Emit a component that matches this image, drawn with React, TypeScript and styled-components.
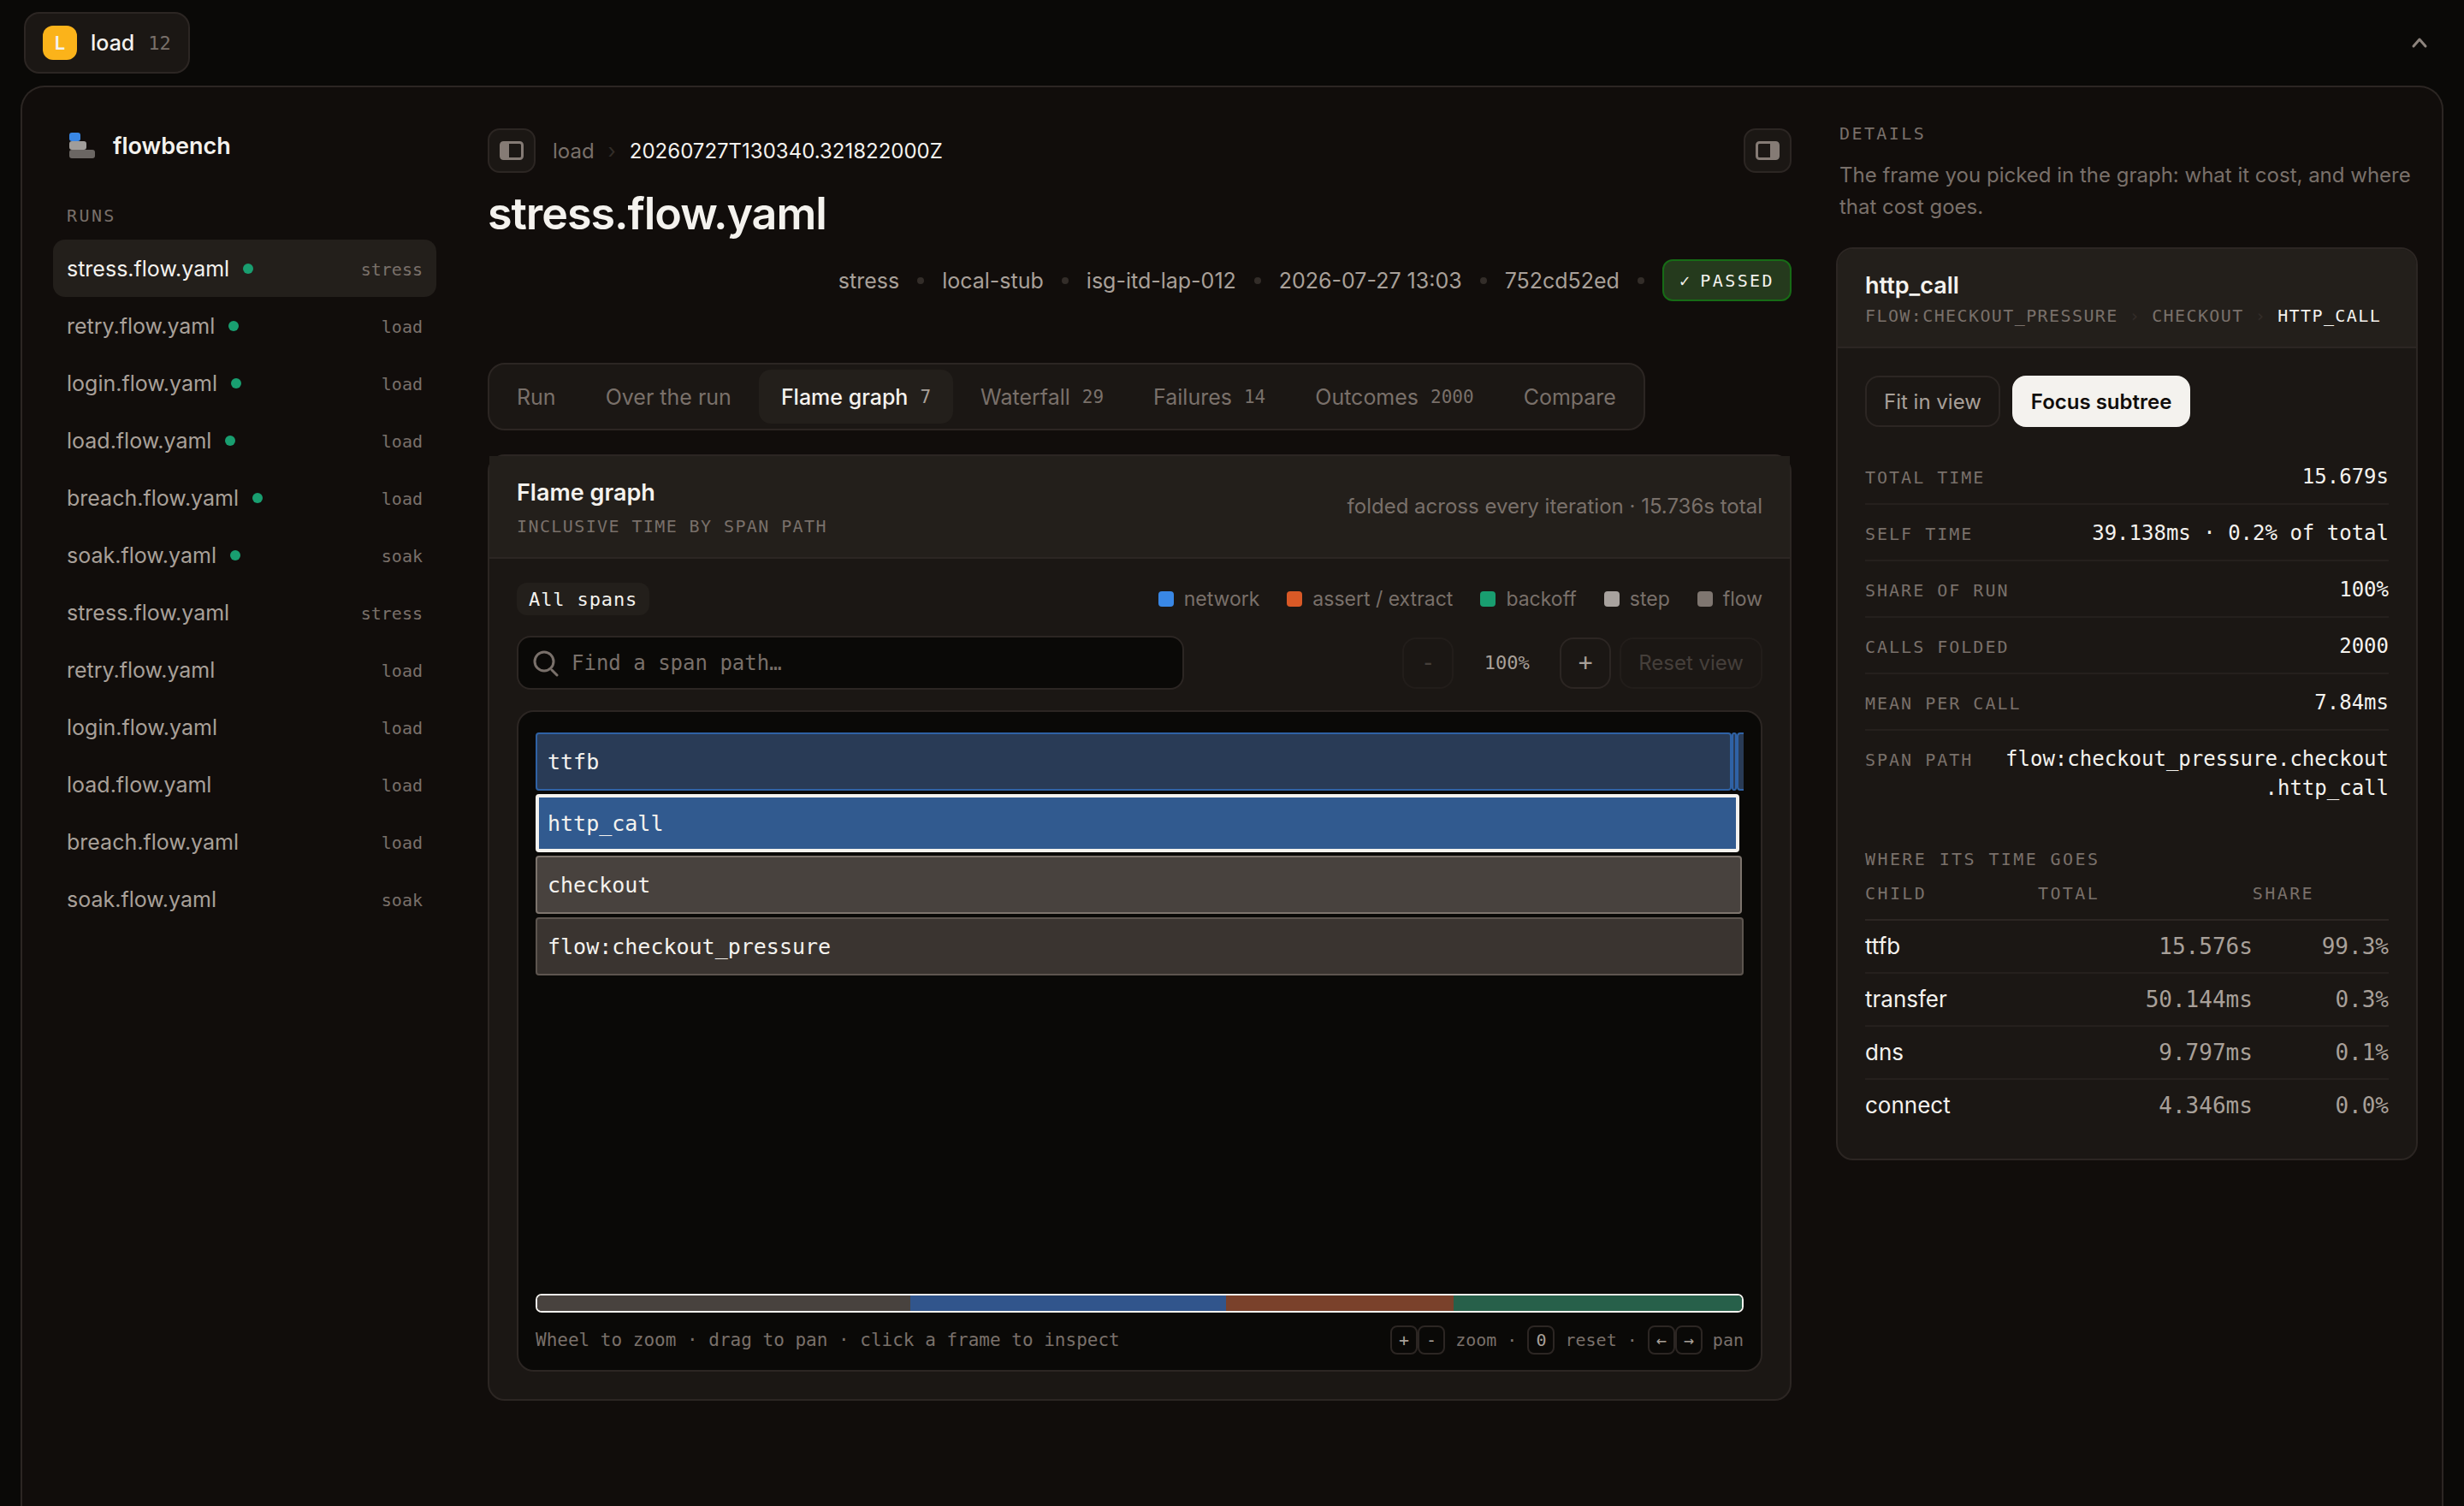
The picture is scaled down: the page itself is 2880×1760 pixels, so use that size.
import React from "react";
import styled, { createGlobalStyle, css } from "styled-components";

const c = {
  page: "#0a0907",
  shell: "#110d0b",
  card: "#1b1714",
  raised: "#231f1b",
  line: "#2c2623",
  hairline: "#25201d",
  text: "#f4f2ee",
  soft: "#a8a099",
  muted: "#79706a",
  faint: "#332d29",
  blue: "#3987e5",
  orange: "#d95926",
  green: "#199e70",
  step: "#a8a29e",
  flow: "#7f7670",
};

const sans = `Inter, "Liberation Sans", sans-serif`;
const mono = `"DejaVu Sans Mono", "Liberation Mono", monospace`;

const GlobalStyle = createGlobalStyle`
  *, *::before, *::after { box-sizing: border-box; }
  html { background: ${c.page}; }
  body {
    margin: 0;
    background: ${c.page};
    color: ${c.text};
    font-family: ${sans};
    font-size: 24px;
    -webkit-font-smoothing: antialiased;
  }
  h1, h2, h3, p, ul, dl, dd, dt { margin: 0; padding: 0; font-weight: inherit; }
  ul { list-style: none; }
  a { color: inherit; text-decoration: none; }
  button, input { font: inherit; color: inherit; }
  button { background: none; border: 0; padding: 0; cursor: pointer; }
`;

const Page = styled.div`
  display: flex;
  flex-direction: column;
  min-height: 100vh;
`;

/* ---------- top bar ---------- */

const TopBar = styled.header`
  display: flex;
  align-items: center;
  justify-content: space-between;
  padding: 14px 40px 14px 28px;
`;

const ProjectTab = styled.button`
  display: flex;
  align-items: center;
  height: 72px;
  padding: 0 20px;
  gap: 16px;
  border: 2px solid ${c.line};
  border-radius: 18px;
  background: ${c.card};
  font-size: 25px;
  font-weight: 500;
`;

const ProjectMark = styled.span`
  display: grid;
  place-items: center;
  width: 40px;
  height: 40px;
  border-radius: 12px;
  background: #fbb31a;
  font-size: 22px;
  font-weight: 600;
`;

const ProjectCount = styled.span`
  font-family: ${mono};
  font-size: 22px;
  font-weight: 400;
  color: ${c.muted};
`;

const CollapseButton = styled.button`
  display: grid;
  place-items: center;
  width: 24px;
  height: 24px;
  color: #8d847d;
`;

/* ---------- shell ---------- */

const Shell = styled.div`
  flex: 1;
  display: grid;
  grid-template-columns: 448px minmax(0, 1fr) 680px;
  align-items: start;
  margin: 0 24px;
  padding: 40px 28px 120px 36px;
  border: 2px solid ${c.line};
  border-bottom: 0;
  border-radius: 28px 28px 0 0;
  background: ${c.shell};
`;

const Overline = styled.h2<{ $pad?: number }>`
  padding-left: ${(p) => p.$pad ?? 0}px;
  font-family: ${mono};
  font-size: 20px;
  line-height: 28px;
  letter-spacing: 0.12em;
  text-transform: uppercase;
  color: ${c.muted};
`;

/* ---------- sidebar ---------- */

const Sidebar = styled.nav`
  padding-top: 8px;
`;

const Brand = styled.div`
  display: flex;
  align-items: center;
  gap: 20px;
  height: 40px;
  padding-left: 18px;
  margin-bottom: 48px;
  font-size: 27px;
  font-weight: 600;
`;

const RunList = styled.ul`
  margin-top: 14px;
`;

const RunLink = styled.a<{ $active?: boolean }>`
  display: flex;
  align-items: center;
  gap: 16px;
  height: 67px;
  padding: 0 16px;
  border-radius: 14px;
  background: ${(p) => (p.$active ? c.raised : "transparent")};
  color: ${(p) => (p.$active ? c.text : c.soft)};
  font-size: 25px;
`;

const RunDot = styled.span`
  width: 12px;
  height: 12px;
  border-radius: 50%;
  background: ${c.green};
`;

const RunKind = styled.span`
  margin-left: auto;
  padding-top: 2px;
  font-family: ${mono};
  font-size: 20px;
  color: ${c.muted};
`;

/* ---------- main ---------- */

const Main = styled.main`
  padding: 8px 52px 0 60px;
`;

const CrumbBar = styled.div`
  display: flex;
  align-items: center;
  height: 52px;
`;

const PanelButton = styled.button<{ $end?: boolean }>`
  display: grid;
  place-items: center;
  width: 56px;
  height: 52px;
  margin-left: ${(p) => (p.$end ? "auto" : "0")};
  border: 2px solid ${c.line};
  border-radius: 14px;
  background: ${c.card};
`;

const Crumbs = styled.div`
  display: flex;
  align-items: center;
  gap: 16px;
  padding-left: 20px;
  color: ${c.text};
`;

const CrumbLink = styled.a`
  color: ${c.muted};
`;

const CrumbSep = styled.span`
  color: ${c.faint};
`;

const Title = styled.h1`
  margin: 18px 0 23px;
  font-size: 52px;
  line-height: 60px;
  font-weight: 600;
  letter-spacing: -0.02em;
`;

const MetaRow = styled.div`
  display: flex;
  align-items: center;
  justify-content: flex-end;
  gap: 21px;
  height: 49px;
  color: ${c.soft};
  font-size: 25px;
`;

const MetaDot = styled.span`
  width: 8px;
  height: 8px;
  border-radius: 50%;
  background: ${c.faint};
`;

const Badge = styled.span`
  display: flex;
  align-items: center;
  gap: 10px;
  height: 49px;
  padding: 0 18px;
  border: 2px solid #176b16;
  border-radius: 12px;
  background: #253a1d;
  color: ${c.text};
  font-family: ${mono};
  font-size: 20px;
  letter-spacing: 0.12em;
`;

const TabBar = styled.div`
  display: inline-flex;
  gap: 6px;
  margin-top: 72px;
  padding: 6px;
  border: 2px solid ${c.line};
  border-radius: 20px;
  background: ${c.card};
`;

const Tab = styled.button<{ $active?: boolean }>`
  display: flex;
  align-items: center;
  gap: 14px;
  height: 63px;
  padding: 0 26px;
  border-radius: 14px;
  color: ${c.muted};
  font-size: 25px;
  ${(p) =>
    p.$active &&
    css`
      background: ${c.raised};
      color: ${c.text};
      font-weight: 500;
    `}
`;

const TabCount = styled.span<{ $active?: boolean }>`
  font-family: ${mono};
  font-size: 21px;
  font-weight: 400;
  color: ${(p) => (p.$active ? c.soft : c.muted)};
`;

/* ---------- cards ---------- */

const Card = styled.section<{ $clip?: boolean }>`
  border: 2px solid ${c.line};
  border-radius: 20px;
  background: ${c.card};
  overflow: ${(p) => (p.$clip ? "hidden" : "visible")};
`;

const CardHeader = styled.header`
  display: flex;
  align-items: center;
  justify-content: space-between;
  padding: 27px 32px 24px;
  border-bottom: 2px solid ${c.line};
  background: ${c.raised};
`;

const CardTitle = styled.h2`
  font-size: 27px;
  line-height: 32px;
  font-weight: 600;
`;

const CardSub = styled.div<{ $gap: number }>`
  display: flex;
  gap: 13px;
  margin-top: ${(p) => p.$gap}px;
  font-family: ${mono};
  font-size: 20px;
  line-height: 24px;
  letter-spacing: 0.07em;
  text-transform: uppercase;
  white-space: nowrap;
  color: ${c.muted};
`;

const CardNote = styled.p`
  padding-bottom: 4px;
  color: ${c.muted};
`;

const FlameCard = styled(Card)`
  margin-top: 28px;
`;

const FlameBody = styled.div`
  display: flex;
  flex-direction: column;
  gap: 24px;
  padding: 28px 32px 32px;
`;

const Spread = styled.div`
  display: flex;
  align-items: center;
  justify-content: space-between;
`;

const ScopeChip = styled.button`
  height: 38px;
  padding: 0 14px;
  border-radius: 12px;
  background: ${c.raised};
  font-family: ${mono};
  font-size: 22px;
  letter-spacing: 0.04em;
`;

const Legend = styled.ul`
  display: flex;
  gap: 32px;
  color: ${c.muted};
  font-size: 23px;
`;

const LegendItem = styled.li`
  display: flex;
  align-items: center;
  gap: 12px;
`;

const Swatch = styled.span<{ $color: string }>`
  width: 18px;
  height: 18px;
  border-radius: 4px;
  background: ${(p) => p.$color};
`;

const SearchBox = styled.label`
  display: flex;
  align-items: center;
  gap: 14px;
  width: 780px;
  height: 63px;
  padding: 0 16px;
  border: 2px solid ${c.line};
  border-radius: 16px;
  background: ${c.page};
`;

const SearchInput = styled.input`
  flex: 1;
  min-width: 0;
  padding: 0;
  border: 0;
  outline: 0;
  background: transparent;
  font-family: ${mono};
  font-size: 24px;
  &::placeholder {
    color: ${c.muted};
    opacity: 1;
  }
`;

const ZoomGroup = styled.div`
  display: flex;
  align-items: center;
  gap: 10px;
`;

const OutlineButton = styled.button<{ $square?: boolean; $primary?: boolean }>`
  height: 60px;
  ${(p) =>
    p.$square
      ? css`
          width: 60px;
          font-family: ${mono};
          font-size: 28px;
        `
      : css`
          padding: 0 20px;
        `}
  border: 2px solid ${(p) => (p.$primary ? c.text : c.line)};
  border-radius: 16px;
  background: ${(p) => (p.$primary ? c.text : "transparent")};
  color: ${(p) => (p.$primary ? c.shell : c.soft)};
  font-weight: ${(p) => (p.$primary ? 600 : 400)};
  &:disabled {
    color: ${c.muted};
    opacity: 0.45;
  }
`;

const ZoomValue = styled.output`
  width: 104px;
  text-align: center;
  font-family: ${mono};
  font-size: 22px;
  color: ${c.soft};
`;

/* ---------- flame canvas ---------- */

const Canvas = styled.div`
  padding: 24px 20px 18px;
  border: 2px solid ${c.line};
  border-radius: 20px;
  background: ${c.page};
`;

const Frames = styled.div`
  display: flex;
  flex-direction: column;
  gap: 4px;
  min-height: 656px;
`;

const FrameRow = styled.div`
  display: flex;
  height: 68px;
`;

type Tone = "network" | "picked" | "step" | "flow";

const tones: Record<Tone, { bg: string; edge: string; width: number }> = {
  network: { bg: "#293b56", edge: "#2f62a5", width: 2 },
  picked: { bg: "#315a8f", edge: c.text, width: 4 },
  step: { bg: "#48423e", edge: "#7d746d", width: 2 },
  flow: { bg: "#3a3430", edge: "#5d554f", width: 2 },
};

const Frame = styled.button<{ $tone: Tone; $share: number; $cut?: boolean }>`
  width: ${(p) => p.$share}%;
  padding: 0 ${(p) => (p.$share > 5 ? 14 - tones[p.$tone].width : 0)}px;
  overflow: hidden;
  border: ${(p) => tones[p.$tone].width}px solid ${(p) => tones[p.$tone].edge};
  border-radius: 4px;
  background: ${(p) => tones[p.$tone].bg};
  font-family: ${mono};
  font-size: 25px;
  text-align: left;
  ${(p) =>
    p.$cut &&
    css`
      border-right: 0;
      border-radius: 4px 0 0 4px;
    `}
`;

const Minimap = styled.div`
  display: flex;
  height: 22px;
  overflow: hidden;
  border: 2px solid ${c.text};
  border-radius: 7px;
`;

const MinimapPart = styled.span<{ $color: string; $share: number }>`
  width: ${(p) => p.$share}%;
  background: ${(p) => p.$color};
`;

const CanvasFoot = styled.div`
  display: flex;
  align-items: center;
  justify-content: space-between;
  margin-top: 15px;
  font-family: ${mono};
  font-size: 20px;
  line-height: 34px;
  color: ${c.muted};
`;

const Hint = styled.p`
  font-size: 21px;
`;

const Keys = styled.p`
  display: flex;
  white-space: pre;
`;

const Key = styled.kbd`
  width: 32px;
  height: 34px;
  border: 2px solid ${c.line};
  border-radius: 8px;
  font-family: ${mono};
  font-size: 20px;
  line-height: 30px;
  text-align: center;
  color: ${c.soft};
`;

/* ---------- details ---------- */

const Details = styled.aside``;

const Blurb = styled.p`
  margin: 16px 4px 29px;
  line-height: 37px;
  color: ${c.muted};
`;

const DetailBody = styled.div`
  padding: 32px;
`;

const Actions = styled.div`
  display: flex;
  gap: 14px;
  margin-bottom: 25px;
`;

const PathPart = styled.span<{ $tone?: "here" | "sep" }>`
  color: ${(p) => (p.$tone === "here" ? c.text : p.$tone === "sep" ? c.faint : c.muted)};
`;

const Facts = styled.dl`
  margin-bottom: 38px;
`;

const Fact = styled.div`
  display: flex;
  align-items: baseline;
  justify-content: space-between;
  gap: 32px;
  padding: 16px 0 14px;
  font-family: ${mono};
  line-height: 34px;
  &:not(:last-child) {
    border-bottom: 2px solid ${c.hairline};
  }
`;

const FactName = styled.dt`
  flex: none;
  font-size: 20px;
  line-height: 28px;
  letter-spacing: 0.1em;
  text-transform: uppercase;
  color: ${c.muted};
`;

const FactValue = styled.dd`
  text-align: right;
  overflow-wrap: anywhere;
`;

const Children = styled.table`
  width: 100%;
  table-layout: fixed;
  border-collapse: separate;
  border-spacing: 0;
  font-size: 26px;
`;

const Th = styled.th<{ $width: number }>`
  width: ${(p) => p.$width}%;
  padding: 12px 0 16px;
  border-bottom: 2px solid ${c.line};
  font-family: ${mono};
  font-size: 20px;
  line-height: 28px;
  font-weight: 400;
  letter-spacing: 0.12em;
  text-align: left;
  text-transform: uppercase;
  color: ${c.muted};
`;

const Td = styled.td<{ $num?: boolean }>`
  padding: 14px 0;
  line-height: 32px;
  ${(p) =>
    p.$num &&
    css`
      font-family: ${mono};
      text-align: right;
      color: ${c.soft};
    `}
  tr:not(:last-child) > & {
    border-bottom: 2px solid ${c.hairline};
  }
`;

/* ---------- data ---------- */

const runs = [
  ["stress", "stress", true],
  ["retry", "load", true],
  ["login", "load", true],
  ["load", "load", true],
  ["breach", "load", true],
  ["soak", "soak", true],
  ["stress", "stress", false],
  ["retry", "load", false],
  ["login", "load", false],
  ["load", "load", false],
  ["breach", "load", false],
  ["soak", "soak", false],
] as const;

const meta = ["stress", "local-stub", "isg-itd-lap-012", "2026-07-27 13:03", "752cd52ed"];

const tabs: { label: string; count?: number }[] = [
  { label: "Run" },
  { label: "Over the run" },
  { label: "Flame graph", count: 7 },
  { label: "Waterfall", count: 29 },
  { label: "Failures", count: 14 },
  { label: "Outcomes", count: 2000 },
  { label: "Compare" },
];

const legend = [
  ["network", c.blue],
  ["assert / extract", c.orange],
  ["backoff", c.green],
  ["step", c.step],
  ["flow", c.flow],
];

const flames: { name: string; tone: Tone; share: number; cut?: boolean }[][] = [
  [
    { name: "ttfb", tone: "network", share: 99 },
    { name: "", tone: "network", share: 0.4 },
    { name: "", tone: "network", share: 0.6, cut: true },
  ],
  [{ name: "http_call", tone: "picked", share: 99.65 }],
  [{ name: "checkout", tone: "step", share: 99.85 }],
  [{ name: "flow:checkout_pressure", tone: "flow", share: 100 }],
];

const minimap = [
  ["#48423e", 31],
  ["#31558c", 26.2],
  ["#7a412b", 18.9],
  ["#27604a", 23.9],
] as const;

const facts = [
  ["Total time", "15.679s"],
  ["Self time", "39.138ms · 0.2% of total"],
  ["Share of run", "100%"],
  ["Calls folded", "2000"],
  ["Mean per call", "7.84ms"],
  ["Span path", "flow:checkout_pressure.checkout.http_call"],
];

const children = [
  ["ttfb", "15.576s", "99.3%"],
  ["transfer", "50.144ms", "0.3%"],
  ["dns", "9.797ms", "0.1%"],
  ["connect", "4.346ms", "0.0%"],
];

/* ---------- icons ---------- */

const BrandIcon = () => (
  <svg width="32" height="32" viewBox="0 0 32 32" aria-hidden="true">
    <rect x="1" y="1" width="13" height="10" rx="3" fill={c.blue} />
    <rect x="1" y="11" width="20" height="10" rx="3" fill="#a09d9a" />
    <rect x="1" y="21" width="30" height="10" rx="3" fill="#6b6663" />
  </svg>
);

const PanelIcon = ({ side }: { side: "left" | "right" }) => (
  <svg width="28" height="22" viewBox="0 0 28 22" aria-hidden="true">
    <rect x="1.5" y="1.5" width="25" height="19" rx="3" fill="none" stroke="#857b75" strokeWidth="3" />
    <rect x={side === "left" ? 1 : 17} y="1" width="10" height="20" rx="2" fill="#857b75" />
  </svg>
);

const SearchIcon = () => (
  <svg width="32" height="32" viewBox="0 0 32 32" fill="none" stroke="#79706a" strokeWidth="3" strokeLinecap="round" aria-hidden="true">
    <circle cx="14" cy="14" r="11" />
    <path d="M23 24l6 6" />
  </svg>
);

const ChevronUp = () => (
  <svg width="20" height="14" viewBox="0 0 20 14" fill="none" stroke="currentColor" strokeWidth="3" strokeLinecap="round" strokeLinejoin="round" aria-hidden="true">
    <path d="M3 11l7-8 7 8" />
  </svg>
);

/* ---------- app ---------- */

export default function App() {
  return (
    <Page>
      <GlobalStyle />
      <TopBar>
        <ProjectTab>
          <ProjectMark>L</ProjectMark>
          load
          <ProjectCount>12</ProjectCount>
        </ProjectTab>
        <CollapseButton aria-label="Collapse">
          <ChevronUp />
        </CollapseButton>
      </TopBar>

      <Shell>
        <Sidebar>
          <Brand>
            <BrandIcon />
            flowbench
          </Brand>
          <Overline $pad={16}>Runs</Overline>
          <RunList>
            {runs.map(([name, kind, fresh], i) => (
              <li key={i}>
                <RunLink href="#run" $active={i === 0}>
                  {name}.flow.yaml
                  {fresh && <RunDot />}
                  <RunKind>{kind}</RunKind>
                </RunLink>
              </li>
            ))}
          </RunList>
        </Sidebar>

        <Main>
          <CrumbBar>
            <PanelButton aria-label="Toggle sidebar">
              <PanelIcon side="left" />
            </PanelButton>
            <Crumbs>
              <CrumbLink href="#load">load</CrumbLink>
              <CrumbSep>›</CrumbSep>
              <span>20260727T130340.321822000Z</span>
            </Crumbs>
            <PanelButton aria-label="Toggle details" $end>
              <PanelIcon side="right" />
            </PanelButton>
          </CrumbBar>
          <Title>stress.flow.yaml</Title>
          <MetaRow>
            {meta.map((m) => (
              <React.Fragment key={m}>
                <span>{m}</span>
                <MetaDot />
              </React.Fragment>
            ))}
            <Badge>
              <span>✓</span>
              <span>PASSED</span>
            </Badge>
          </MetaRow>

          <TabBar role="tablist">
            {tabs.map((t) => {
              const active = t.label === "Flame graph";
              return (
                <Tab key={t.label} role="tab" aria-selected={active} $active={active}>
                  {t.label}
                  {t.count !== undefined && <TabCount $active={active}>{t.count}</TabCount>}
                </Tab>
              );
            })}
          </TabBar>

          <FlameCard>
            <CardHeader>
              <div>
                <CardTitle>Flame graph</CardTitle>
                <CardSub $gap={11}>Inclusive time by span path</CardSub>
              </div>
              <CardNote>folded across every iteration · 15.736s total</CardNote>
            </CardHeader>
            <FlameBody>
              <Spread>
                <ScopeChip>All spans</ScopeChip>
                <Legend>
                  {legend.map(([name, color]) => (
                    <LegendItem key={name}>
                      <Swatch $color={color} />
                      {name}
                    </LegendItem>
                  ))}
                </Legend>
              </Spread>
              <Spread>
                <SearchBox>
                  <SearchIcon />
                  <SearchInput type="text" aria-label="Find a span path" placeholder="Find a span path…" />
                </SearchBox>
                <ZoomGroup>
                  <OutlineButton $square disabled aria-label="Zoom out">
                    -
                  </OutlineButton>
                  <ZoomValue>100%</ZoomValue>
                  <OutlineButton $square aria-label="Zoom in">
                    +
                  </OutlineButton>
                  <OutlineButton disabled>Reset view</OutlineButton>
                </ZoomGroup>
              </Spread>
              <Canvas>
                <Frames>
                  {flames.map((row, r) => (
                    <FrameRow key={r}>
                      {row.map((f, i) => (
                        <Frame key={i} $tone={f.tone} $share={f.share} $cut={f.cut} aria-label={f.name || "span"}>
                          {f.name}
                        </Frame>
                      ))}
                    </FrameRow>
                  ))}
                </Frames>
                <Minimap>
                  {minimap.map(([color, share]) => (
                    <MinimapPart key={color} $color={color} $share={share} />
                  ))}
                </Minimap>
                <CanvasFoot>
                  <Hint>Wheel to zoom · drag to pan · click a frame to inspect</Hint>
                  <Keys>
                    <Key>+</Key>
                    <Key>-</Key>
                    <span> zoom · </span>
                    <Key>0</Key>
                    <span> reset · </span>
                    <Key>←</Key>
                    <Key>→</Key>
                    <span> pan</span>
                  </Keys>
                </CanvasFoot>
              </Canvas>
            </FlameBody>
          </FlameCard>
        </Main>

        <Details>
          <Overline $pad={4}>Details</Overline>
          <Blurb>The frame you picked in the graph: what it cost, and where that cost goes.</Blurb>
          <Card $clip>
            <CardHeader>
              <div>
                <CardTitle>http_call</CardTitle>
                <CardSub $gap={7}>
                  <PathPart>flow:checkout_pressure</PathPart>
                  <PathPart $tone="sep">›</PathPart>
                  <PathPart>checkout</PathPart>
                  <PathPart $tone="sep">›</PathPart>
                  <PathPart $tone="here">http_call</PathPart>
                </CardSub>
              </div>
            </CardHeader>
            <DetailBody>
              <Actions>
                <OutlineButton>Fit in view</OutlineButton>
                <OutlineButton $primary>Focus subtree</OutlineButton>
              </Actions>
              <Facts>
                {facts.map(([name, value]) => (
                  <Fact key={name}>
                    <FactName>{name}</FactName>
                    <FactValue>{value}</FactValue>
                  </Fact>
                ))}
              </Facts>
              <Overline as="h3">Where its time goes</Overline>
              <Children>
                <thead>
                  <tr>
                    <Th $width={33}>Child</Th>
                    <Th $width={41}>Total</Th>
                    <Th $width={26}>Share</Th>
                  </tr>
                </thead>
                <tbody>
                  {children.map(([name, total, share]) => (
                    <tr key={name}>
                      <Td>{name}</Td>
                      <Td $num>{total}</Td>
                      <Td $num>{share}</Td>
                    </tr>
                  ))}
                </tbody>
              </Children>
            </DetailBody>
          </Card>
        </Details>
      </Shell>
    </Page>
  );
}
